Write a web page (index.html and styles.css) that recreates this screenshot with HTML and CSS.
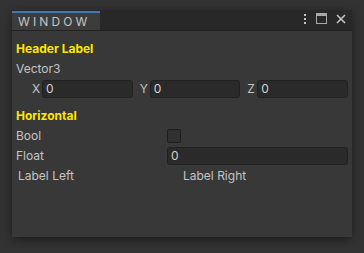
FILE: index.html
```html
<!DOCTYPE html>
<html lang="en">
<head>
  <meta charset="UTF-8" />
  <title>Window</title>
  <link rel="stylesheet" href="styles.css">
</head>
<body>

  <div class="window">
    <div class="tab-bar">
      <div class="tab">WINDOW</div>
      <div class="tab-icons">
        <svg width="4" height="12" viewBox="0 0 4 12"><rect x="1" y="1" width="2" height="2" fill="#c4c4c4"/><rect x="1" y="5" width="2" height="2" fill="#c4c4c4"/><rect x="1" y="9" width="2" height="2" fill="#c4c4c4"/></svg>
        <svg width="11" height="11" viewBox="0 0 11 11"><rect x="0.5" y="0.5" width="10" height="10" fill="none" stroke="#a8a8a8"/><rect x="0" y="0" width="11" height="3" fill="#a8a8a8"/></svg>
        <svg width="10" height="10" viewBox="0 0 10 10"><path d="M1 1 L9 9 M9 1 L1 9" stroke="#c4c4c4" stroke-width="1.6"/></svg>
      </div>
    </div>

    <div class="content">
      <div class="row header">Header Label</div>
      <div class="row">Vector3</div>
      <div class="row vector">
        <div class="axis"><span>X</span><div class="field">0</div></div>
        <div class="axis"><span>Y</span><div class="field">0</div></div>
        <div class="axis"><span>Z</span><div class="field">0</div></div>
      </div>

      <div class="row header spaced">Horizontal</div>
      <div class="row prop">
        <div class="prop-label">Bool</div>
        <div class="checkbox"></div>
      </div>
      <div class="row prop">
        <div class="prop-label">Float</div>
        <div class="field wide">0</div>
      </div>
      <div class="row split">
        <div class="half left">Label Left</div>
        <div class="half">Label Right</div>
      </div>
    </div>
  </div>

</body>
</html>
```

FILE: styles.css
```css
* { margin: 0; padding: 0; box-sizing: border-box; }

body {
  font-family: Inter, "Noto Sans", sans-serif;
  font-size: 12px;
  background: #333333;
  color: #c4c4c4;
  padding: 10px 12px;
  width: 364px;
  height: 253px;
  overflow: hidden;
}

.window {
  width: 340px;
  height: 227px;
  background: #383838;
  box-shadow: 0 3px 10px rgba(0, 0, 0, 0.45);
  display: flex;
  flex-direction: column;
}

.tab-bar {
  height: 21px;
  background: #282828;
  border-bottom: 1px solid #232323;
  display: flex;
  align-items: flex-end;
  justify-content: space-between;
}

.tab {
  width: 88px;
  height: 19px;
  background: #3c3c3c;
  border-top: 2px solid #3a79bb;
  letter-spacing: 3.1px;
  padding-left: 6px;
  line-height: 17px;
  color: #c4c4c4;
}

.tab-icons {
  display: flex;
  align-items: center;
  gap: 9px;
  height: 21px;
  padding-right: 6px;
  padding-bottom: 2px;
}

.content {
  padding: 9px 4px 0 4px;
  display: flex;
  flex-direction: column;
  gap: 2px;
}

.row {
  height: 18px;
  line-height: 18px;
  display: flex;
  align-items: center;
}

.header {
  color: #ffe600;
  font-weight: bold;
}

.spaced {
  margin-top: 7px;
}

.vector {
  display: grid;
  grid-template-columns: repeat(3, 1fr);
  gap: 4px;
  padding-left: 13px;
}

.axis {
  display: flex;
  align-items: center;
  height: 18px;
}

.axis span {
  width: 13px;
  padding-left: 3px;
}

.field {
  flex: 1;
  height: 18px;
  line-height: 16px;
  background: #2a2a2a;
  border: 1px solid #212121;
  border-radius: 3px;
  padding-left: 3px;
  color: #d2d2d2;
}

.prop-label {
  width: 151px;
}

.checkbox {
  width: 14px;
  height: 14px;
  background: #313131;
  border: 1px solid #1f1f1f;
  border-radius: 2px;
}

.split .half {
  flex: 1;
}

.split .left {
  padding-left: 2px;
}
```
